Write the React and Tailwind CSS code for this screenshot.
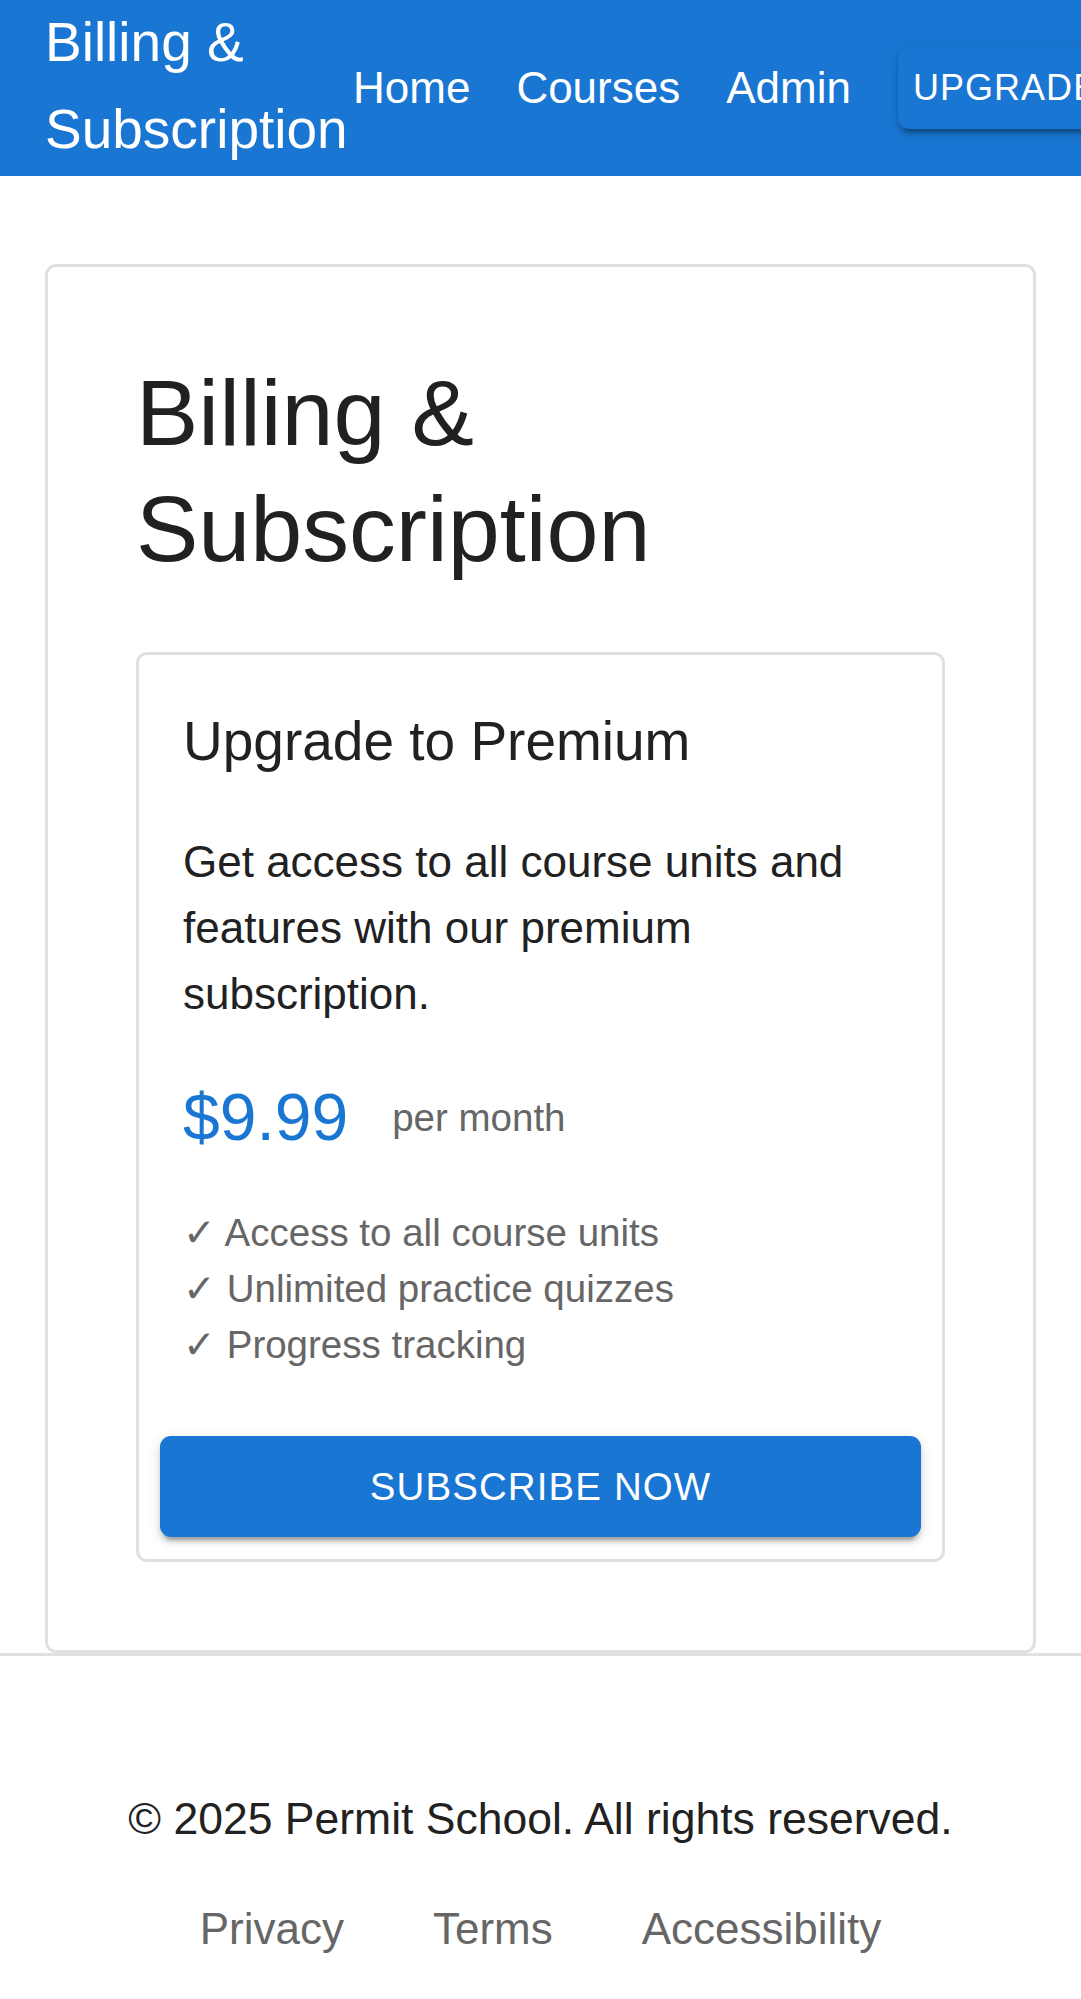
// Billing & Subscription page (mobile layout, rendered at 2.75x)

const navLinks = ['Home', 'Courses', 'Admin'];

const features = [
  'Access to all course units',
  'Unlimited practice quizzes',
  'Progress tracking',
];

const footerLinks = ['Privacy', 'Terms', 'Accessibility'];

const Header = () => (
  <header className="flex h-[176px] items-center overflow-hidden bg-[#1976d2] pl-[45px] text-white">
    <div className="w-[285px] shrink-0 pb-[5px] text-[55px] leading-[87px]">
      Billing &amp; Subscription
    </div>
    <nav className="flex shrink-0 items-center pb-[2px]">
      {navLinks.map((link) => (
        <a key={link} href="#" className="shrink-0 px-[23px] text-[44px] leading-[77px]">
          {link}
        </a>
      ))}
    </nav>
    <button className="ml-[24px] shrink-0 whitespace-nowrap rounded-[11px] bg-[#1976d2] pl-[15px] pr-[28px] py-[10px] text-[36px] leading-[62px] uppercase tracking-[0.02857em] text-white shadow-[0_8px_3px_-5px_rgba(0,0,0,0.2),0_5px_5px_0_rgba(0,0,0,0.14),0_3px_14px_0_rgba(0,0,0,0.12)]">
      Upgrade
    </button>
  </header>
);

const PremiumCard = () => (
  <div className="rounded-[11px] border-[3px] border-[#e0e0e0]">
    <div className="px-[44px] pt-[42px] pb-[63px]">
      <h2 className="mb-[44px] text-[55px] leading-[88px]">Upgrade to Premium</h2>
      <p className="mb-[46px] text-[44px] leading-[66px]">
        Get access to all course units and features with our premium subscription.
      </p>
      <div className="mb-[44px] flex items-center">
        <span className="text-[66px] leading-[88px] text-[#1976d2]">$9.99</span>
        <span className="ml-[44px] text-[38.5px] leading-[55px] text-[#666666]">per month</span>
      </div>
      <div className="text-[38.5px] leading-[56px] text-[#666666]">
        {features.map((f) => (
          <div key={f}>✓ {f}</div>
        ))}
      </div>
    </div>
    <div className="px-[21px] pb-[22px]">
      <button className="h-[101px] w-full rounded-[11px] bg-[#1976d2] text-[38.5px] uppercase tracking-[0.02857em] text-white shadow-[0_8px_3px_-5px_rgba(0,0,0,0.2),0_5px_5px_0_rgba(0,0,0,0.14),0_3px_14px_0_rgba(0,0,0,0.12)]">
        Subscribe Now
      </button>
    </div>
  </div>
);

export default function App() {
  return (
    <div className="min-h-screen bg-white font-['Liberation_Sans',Arial,sans-serif] text-[#212121]">
      <Header />

      <main className="px-[45px] pt-[88px]">
        <div className="rounded-[11px] border-[3px] border-[#e0e0e0] p-[88px]">
          <h1 className="mb-[66px] text-[93.5px] leading-[115.5px]">Billing &amp; Subscription</h1>
          <PremiumCard />
        </div>
      </main>

      <footer className="border-t-[3px] border-[#e0e0e0] pt-[130px] pb-[132px] text-center">
        <p className="text-[44.5px] leading-[66px]">© 2025 Permit School. All rights reserved.</p>
        <div className="mt-[44px] flex justify-center gap-[89px] text-[44px] leading-[66px] text-[#666666]">
          {footerLinks.map((link) => (
            <a key={link} href="#">
              {link}
            </a>
          ))}
        </div>
      </footer>
    </div>
  );
}
